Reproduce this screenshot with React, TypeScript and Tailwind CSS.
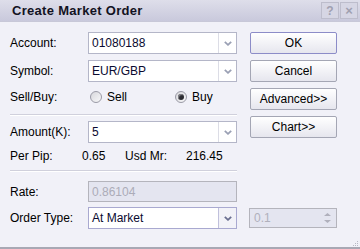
import React from "react";

const font = { fontFamily: '"Liberation Sans", Arial, sans-serif' };

function Chevron({ dark }: { dark?: boolean }) {
  return (
    <svg width="8" height="5" viewBox="0 0 8 5">
      <path d="M0.8 0.8 L4 3.8 L7.2 0.8" fill="none" stroke={dark ? "#6a6f90" : "#9aa0b4"} strokeWidth="1.8" />
    </svg>
  );
}

function Select({ value, hover }: { value: string; hover?: boolean }) {
  return (
    <div className={`flex h-[22px] w-[149px] border ${hover ? "border-[#a9a9d0]" : "border-[#b4b6c8]"} bg-white`}>
      <div className="flex flex-1 items-center pl-[3px] text-[12px] text-[#0a0a30]">{value}</div>
      <div className={`flex w-[18px] items-center justify-center border-l ${hover ? "border-[#c0c0dc] bg-[#f2f2f8]" : "border-[#dcdde6] bg-white"}`}>
        <Chevron dark={hover} />
      </div>
    </div>
  );
}

function Btn({ label, def }: { label: string; def?: boolean }) {
  return (
    <div
      className={`flex h-[22px] w-[87px] items-center justify-center rounded-[2px] border text-[12px] text-black ${
        def ? "border-[#8c8cc8]" : "border-[#a4a6b4]"
      } bg-gradient-to-b from-[#ffffff] to-[#e6e6ee]`}
    >
      {label}
    </div>
  );
}

function Radio({ checked }: { checked?: boolean }) {
  return (
    <div className="flex h-[12px] w-[12px] items-center justify-center rounded-full border border-[#9a9aa6] bg-gradient-to-br from-[#d8d8dc] to-[#f8f8fa]">
      {checked && <div className="h-[6px] w-[6px] rounded-full bg-[#2a2a30] shadow-[inset_1px_1px_1px_#8a8a90]" />}
    </div>
  );
}

export default function App() {
  return (
    <div className="relative flex h-[249px] w-[360px] flex-col overflow-hidden bg-[#f1f1f8]" style={font}>
      {/* title bar */}
      <div className="flex h-[22px] items-center justify-between border-b border-[#c8c8d8] bg-gradient-to-b from-[#dedeea] to-[#c9c9dc] pl-[12px] pr-[2px]">
        <div className="text-[13px] font-bold tracking-[0.3px] text-[#121222]">Create Market Order</div>
        <div className="flex gap-[1px]">
          <div className="flex h-[17px] w-[18px] items-center justify-center border border-[#bdbdcc] bg-[#d6d6e4] text-[12px] font-bold leading-none text-[#a0a0b0]">?</div>
          <div className="flex h-[17px] w-[18px] items-center justify-center border border-[#bdbdcc] bg-[#d6d6e4] text-[13px] font-bold leading-none text-[#a0a0b0]">×</div>
        </div>
      </div>

      <div className="flex pl-[10px] pt-[10px]">
        {/* left column */}
        <div className="flex w-[227px] flex-col text-[12px] text-black">
          <div className="flex items-center">
            <div className="w-[78px]">Account:</div>
            <Select value="01080188" />
          </div>
          <div className="mt-[6px] flex items-center">
            <div className="w-[78px]">Symbol:</div>
            <Select value="EUR/GBP" />
          </div>
          <div className="mt-[7px] flex h-[16px] items-center">
            <div className="w-[80px]">Sell/Buy:</div>
            <Radio />
            <div className="ml-[5px] w-[68px]">Sell</div>
            <Radio checked />
            <div className="ml-[5px]">Buy</div>
          </div>
          <div className="mt-[9px] h-[2px] border-t border-b border-t-[#d0d0dc] border-b-white" />
          <div className="mt-[5px] flex items-center">
            <div className="w-[78px]">Amount(K):</div>
            <Select value="5" />
          </div>
          <div className="mt-[5px] flex h-[16px] items-center">
            <div className="w-[72px]">Per Pip:</div>
            <div className="w-[43px]">0.65</div>
            <div className="w-[61px]">Usd Mr:</div>
            <div>216.45</div>
          </div>
          <div className="mt-[6px] h-[2px] border-t border-b border-t-[#d0d0dc] border-b-white" />
        </div>

        {/* buttons */}
        <div className="ml-[13px] flex flex-col gap-[6px]">
          <Btn label="OK" def />
          <Btn label="Cancel" />
          <Btn label="Advanced>>" />
          <Btn label="Chart>>" />
        </div>
      </div>

      <div className="flex flex-col pl-[10px] pt-[9px] text-[12px] text-black">
        <div className="flex items-center">
          <div className="w-[78px]">Rate:</div>
          <div className="flex h-[21px] w-[149px] items-center border border-[#b4b4bc] bg-[#e4e5f0] pl-[3px] text-[#acacb8]">0.86104</div>
        </div>
        <div className="mt-[5px] flex items-center">
          <div className="w-[78px]">Order Type:</div>
          <Select value="At Market" hover />
          <div className="ml-[12px] flex h-[20px] w-[88px] items-center justify-between border border-[#b4b4bc] bg-[#e4e5f0] pl-[4px] pr-[5px] text-[#b0b0bc]">
            <span>0.1</span>
            <svg width="7" height="12" viewBox="0 0 7 12">
              <path d="M0 4 L3.5 1 L7 4 Z" fill="#b0b0bc" />
              <path d="M0 8 L3.5 11 L7 8 Z" fill="#b0b0bc" />
            </svg>
          </div>
        </div>
      </div>

      {/* bottom border and grip */}
      <div className="absolute bottom-0 left-0 right-0 h-[2px] bg-[#a8a8b4]" />
      <svg className="absolute bottom-[2px] right-[1px]" width="6" height="6" viewBox="0 0 6 6">
        <rect x="4" y="0" width="1" height="1" fill="#b8b8c4" />
        <rect x="2" y="2" width="1" height="1" fill="#b8b8c4" />
        <rect x="4" y="2" width="1" height="1" fill="#b8b8c4" />
        <rect x="0" y="4" width="1" height="1" fill="#b8b8c4" />
        <rect x="2" y="4" width="1" height="1" fill="#b8b8c4" />
        <rect x="4" y="4" width="1" height="1" fill="#b8b8c4" />
      </svg>
    </div>
  );
}
